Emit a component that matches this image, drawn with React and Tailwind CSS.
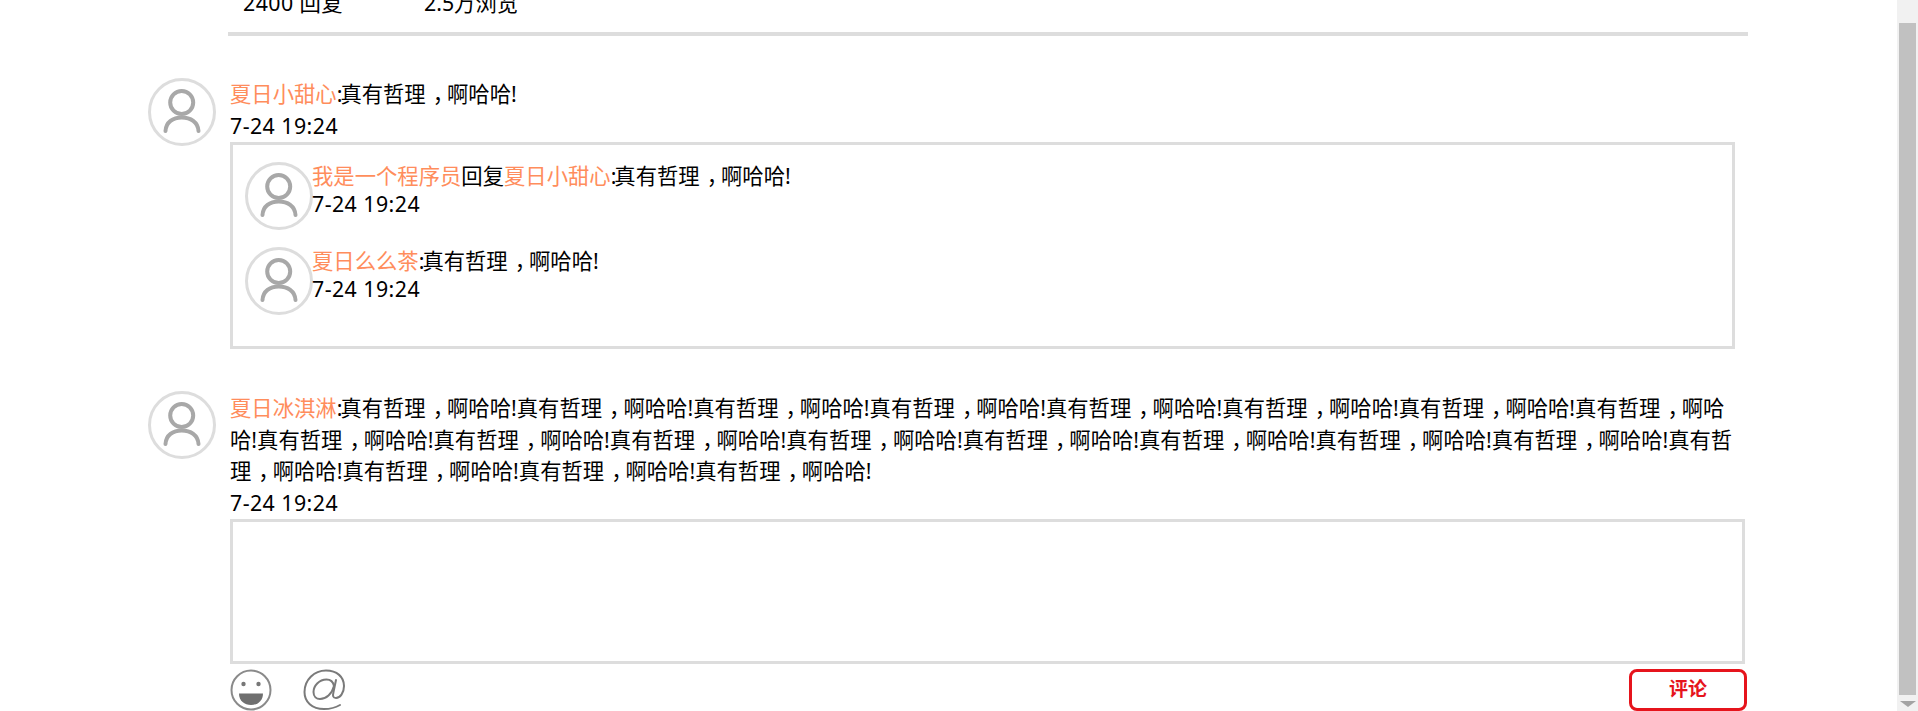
function Comma() {
  return <span className="[font-feature-settings:'halt'] pl-[7px] pr-[3.67px]">，</span>;
}

function Colon() {
  return <span className="-mr-[2px]">:</span>;
}

function Quote() {
  return <>真有哲理<Comma />啊哈哈!</>;
}

function Avatar() {
  return (
    <div className="w-[68px] h-[68px] shrink-0 rounded-full border-[3px] border-[#dddddd] bg-white">
      <svg viewBox="0 0 62 62" className="w-full h-full" fill="none" stroke="#a8a8a8" strokeWidth="4" strokeLinecap="round">
        <circle cx="30.7" cy="21.5" r="11.5" />
        <path d="M14.500 50 C15 41 22 36.500 30.700 36.500 C39.500 36.500 47 41 47.500 50" />
      </svg>
    </div>
  );
}

function Name({ children }) {
  return <span className="text-[#ff8d5c]">{children}</span>;
}

function Time() {
  return <div className="tracking-[0.45px]">7-24 19:24</div>;
}

function Reply({ name, to, className }) {
  return (
    <div className={'flex ' + className}>
      <Avatar />
      <div className="leading-[28px] -ml-px">
        <div>
          <Name>{name}</Name>
          {to && <>回复<Name>{to}</Name></>}
          <Colon /><Quote />
        </div>
        <Time />
      </div>
    </div>
  );
}

function SmileIcon() {
  return (
    <svg viewBox="0 0 42 42" className="w-[42px] h-[42px]">
      <circle cx="21" cy="21" r="19.5" fill="none" stroke="#8a8a8a" strokeWidth="2" />
      <circle cx="13.5" cy="15" r="2.2" fill="#777" />
      <circle cx="28.5" cy="15" r="2.2" fill="#777" />
      <path d="M9 24.5 H33 C33 32 27.5 36 21 36 C14.500 36 9 32 9 24.5 Z" fill="#6f6f6f" />
    </svg>
  );
}

function AtIcon() {
  return (
    <svg viewBox="0 0 42 42" className="w-[42px] h-[42px]" fill="none" stroke="#7a7a7a" strokeWidth="2" strokeLinecap="round">
      <path d="M37 36 C31 39.500 26 40 21 40 C9 40 1.500 33 1.500 23 C1.500 11 11 1.500 23 1.500 C34 1.500 41 8 41 17 C41 24 37 29 33 29 C30 29 29.500 27 30.500 23 L33 11" />
      <path d="M31 17 C30 12 27 10.500 23.500 10.500 C16 10.500 10.500 17 10.500 23 C10.500 27.500 13.500 30 17 30 C23 30 29 25 31 17 Z" />
    </svg>
  );
}

function Scrollbar() {
  return (
    <div className="w-[21px] h-[711px] shrink-0 bg-[#f1f1f1] flex flex-col items-center pt-[23px]">
      <div className="w-[17px] h-[672px] bg-[#c1c1c1]" />
      <div className="mt-[6px] w-0 h-0 border-x-[8px] border-x-transparent border-t-[6px] border-t-[#a3a3a3]" />
    </div>
  );
}

export default function App() {
  return (
    <div
      className="flex h-[711px] overflow-hidden bg-white text-black text-[21.33px] leading-[31.6px]"
      style={{ fontFamily: '"Noto Sans", "Noto Sans CJK SC", sans-serif' }}
    >
      <main className="flex-1 min-w-0 pl-[148px]">
        <div className="ml-[80px] w-[1520px] h-[36px] border-b-4 border-[#dddddd] overflow-hidden">
          <div className="flex -mt-[13px] pl-[15px]">
            <span className="w-[181px] tracking-[0.45px]">2400 回复</span>
            <span>2.5万浏览</span>
          </div>
        </div>

        <section className="flex mt-[42px]">
          <Avatar />
          <div className="ml-[14px] w-[1515px]">
            <div><Name>夏日小甜心</Name><Colon /><Quote /></div>
            <Time />
            <div className="w-[1505px] h-[207px] mt-px border-[3px] border-[#dddddd] pt-[17px] pl-[12px]">
              <Reply name="我是一个程序员" to="夏日小甜心" className="mb-[17px]" />
              <Reply name="夏日么么茶" />
            </div>
          </div>
        </section>

        <section className="flex mt-[42px]">
          <Avatar />
          <div className="ml-[14px] w-[1515px] pt-px">
            <div className="w-[1505px]">
              <Name>夏日冰淇淋</Name><Colon />
              {Array.from({ length: 20 }, (_, i) => <Quote key={i} />)}
            </div>
            <Time />
            <div className="h-[145px] border-[3px] border-[#dddddd]" />
            <div className="flex items-start justify-between mt-[5px]">
              <div className="flex gap-[31px]">
                <SmileIcon />
                <AtIcon />
              </div>
              <button className="w-[118px] h-[42px] -mr-[2px] rounded-[8px] border-[3px] border-[#e6141c] text-[#e6141c] font-bold text-[19px] leading-none">
                评论
              </button>
            </div>
          </div>
        </section>
      </main>
      <Scrollbar />
    </div>
  );
}
